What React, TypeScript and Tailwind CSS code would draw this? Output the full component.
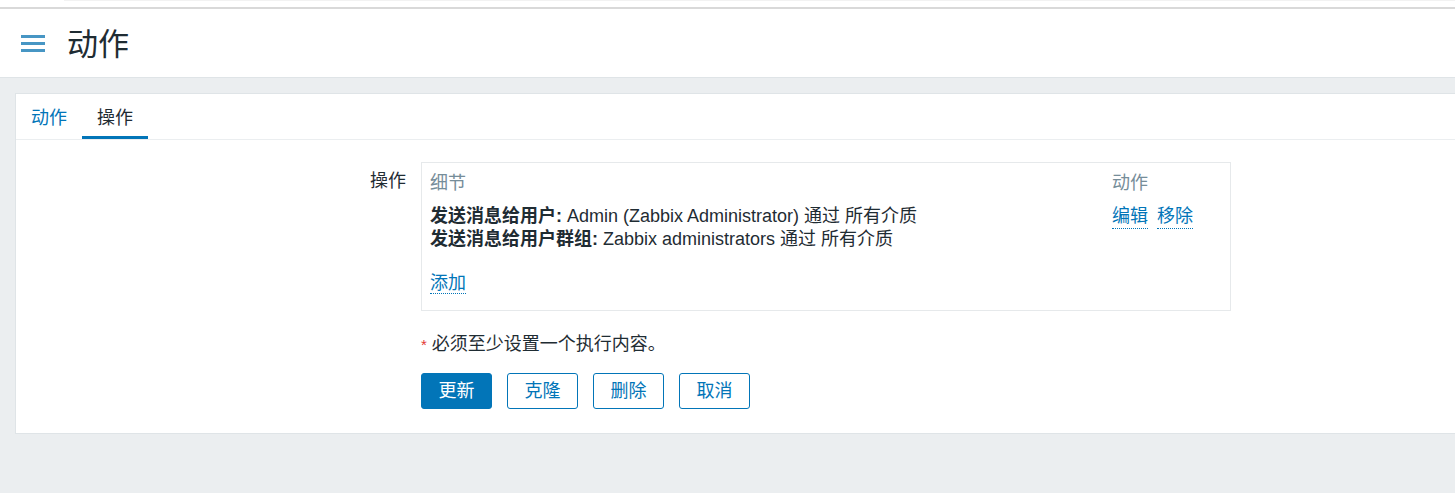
const font = "font-['Liberation_Sans','Noto_Sans_CJK_SC',sans-serif]";

function Hamburger() {
  return (
    <svg width="24" height="17" viewBox="0 0 24 17" className="shrink-0">
      <rect x="0" y="0" width="24" height="3" fill="#4796c4" />
      <rect x="0" y="7" width="24" height="3" fill="#4796c4" />
      <rect x="0" y="14" width="24" height="3" fill="#4796c4" />
    </svg>
  );
}

function DotLink({ children }: { children: string }) {
  return (
    <span className="text-[#0275b8] border-b border-dotted border-[#0275b8] cursor-pointer">
      {children}
    </span>
  );
}

const operations = [
  { label: '发送消息给用户:', text: 'Admin (Zabbix Administrator) 通过 所有介质' },
  { label: '发送消息给用户群组:', text: 'Zabbix administrators 通过 所有介质' },
];

const btn = 'w-[71px] h-[36px] rounded-[3px] border border-[#0275b8] text-[18px]';

export default function App() {
  return (
    <div className={`min-h-screen bg-[#ebeef0] text-[#1f2c33] ${font}`}>
      <div className="h-[7px] bg-white">
        <div className="ml-[64px] h-px bg-[#f2f2f2]" />
      </div>
      <div className="h-[2px] bg-[#d9d9d9]" />
      <header className="h-[69px] bg-white border-b border-[#dfe4e7] flex items-center pl-[21px] gap-[22px]">
        <Hamburger />
        <h1 className="text-[31px] leading-none text-[#1f2c33] pt-[2px]">动作</h1>
      </header>

      <div className="pt-[15px] pl-[15px]">
        <div className="bg-white border border-r-0 border-[#dfe4e7] h-[341px]">
          <div className="flex border-b border-[#ebeef0] h-[46px] text-[18px]">
            <div className="px-[15px] h-[45px] flex items-center text-[#0275b8] pt-[3px]">动作</div>
            <div className="px-[15px] h-[45px] flex items-center border-b-[3px] border-[#0275b8] pt-[6px]">操作</div>
          </div>

          <div className="flex pt-[22px] text-[18px] leading-[23px]">
            <div className="w-[390px] text-right pt-[8px]">操作</div>
            <div className="ml-[15px]">
              <div className="w-[810px] border border-[#e6e9eb] px-[8px] pt-[9px] pb-[15px]">
                <div className="flex text-[#768d99]">
                  <div className="flex-1">细节</div>
                  <div className="w-[110px]">动作</div>
                </div>
                <div className="flex mt-[10px]">
                  <div className="flex-1">
                    {operations.map((op) => (
                      <div key={op.label}>
                        <span className="font-bold">{op.label}</span> {op.text}
                      </div>
                    ))}
                  </div>
                  <div className="w-[110px] flex gap-[9px] items-start">
                    <DotLink>编辑</DotLink>
                    <DotLink>移除</DotLink>
                  </div>
                </div>
                <div className="mt-[21px]">
                  <DotLink>添加</DotLink>
                </div>
              </div>

              <div className="mt-[22px] flex items-start">
                <span className="text-[#e33734] mr-[5px] text-[15px]">*</span>
                <span>必须至少设置一个执行内容。</span>
              </div>

              <div className="mt-[17px] flex gap-[15px]">
                <button className={`${btn} bg-[#0275b8] text-white`}>更新</button>
                <button className={`${btn} bg-white text-[#0275b8]`}>克隆</button>
                <button className={`${btn} bg-white text-[#0275b8]`}>删除</button>
                <button className={`${btn} bg-white text-[#0275b8]`}>取消</button>
              </div>
            </div>
          </div>
        </div>
      </div>
    </div>
  );
}
